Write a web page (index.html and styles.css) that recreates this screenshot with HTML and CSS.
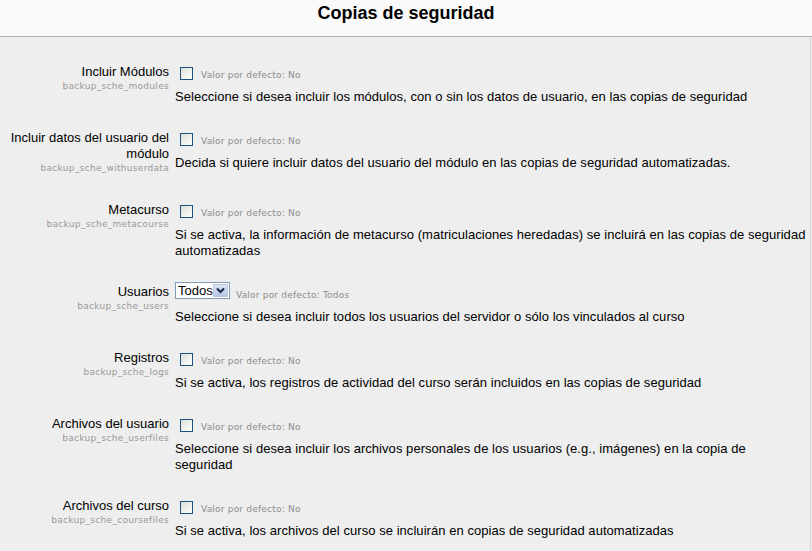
FILE: index.html
```html
<!DOCTYPE html>
<html lang="es">
<head>
    <meta charset="UTF-8">
    <title>Copias de seguridad</title>
    <link rel="stylesheet" href="styles.css">
</head>
<body>

<header class="heading">
    <h2>Copias de seguridad</h2>
</header>

<div class="panel">

    <div class="form-item">
        <div class="form-label">
            <label>Incluir Módulos</label>
            <span class="form-shortname">backup_sche_modules</span>
        </div>
        <div class="form-setting">
            <span class="checkbox"></span>
            <span class="defaultinfo">Valor por defecto: No</span>
        </div>
        <div class="form-description">Seleccione si desea incluir los módulos, con o sin los datos de usuario, en las copias de seguridad</div>
    </div>

    <div class="form-item">
        <div class="form-label">
            <label>Incluir datos del usuario del módulo</label>
            <span class="form-shortname">backup_sche_withuserdata</span>
        </div>
        <div class="form-setting">
            <span class="checkbox"></span>
            <span class="defaultinfo">Valor por defecto: No</span>
        </div>
        <div class="form-description">Decida si quiere incluir datos del usuario del módulo en las copias de seguridad automatizadas.</div>
    </div>

    <div class="form-item">
        <div class="form-label">
            <label>Metacurso</label>
            <span class="form-shortname">backup_sche_metacourse</span>
        </div>
        <div class="form-setting">
            <span class="checkbox"></span>
            <span class="defaultinfo">Valor por defecto: No</span>
        </div>
        <div class="form-description">Si se activa, la información de metacurso (matriculaciones heredadas) se incluirá en las copias de seguridad automatizadas</div>
    </div>

    <div class="form-item">
        <div class="form-label">
            <label>Usuarios</label>
            <span class="form-shortname">backup_sche_users</span>
        </div>
        <div class="form-setting">
            <span class="select">
                <span class="select-value">Todos</span>
                <span class="select-arrow">
                    <svg width="9" height="7" viewBox="0 0 9 7"><path d="M1 1.5 L4.5 5 L8 1.5" fill="none" stroke="#1e2a4a" stroke-width="2.2"/></svg>
                </span>
            </span>
            <span class="defaultinfo after-select">Valor por defecto: Todos</span>
        </div>
        <div class="form-description">Seleccione si desea incluir todos los usuarios del servidor o sólo los vinculados al curso</div>
    </div>

    <div class="form-item">
        <div class="form-label">
            <label>Registros</label>
            <span class="form-shortname">backup_sche_logs</span>
        </div>
        <div class="form-setting">
            <span class="checkbox"></span>
            <span class="defaultinfo">Valor por defecto: No</span>
        </div>
        <div class="form-description">Si se activa, los registros de actividad del curso serán incluidos en las copias de seguridad</div>
    </div>

    <div class="form-item">
        <div class="form-label">
            <label>Archivos del usuario</label>
            <span class="form-shortname">backup_sche_userfiles</span>
        </div>
        <div class="form-setting">
            <span class="checkbox"></span>
            <span class="defaultinfo">Valor por defecto: No</span>
        </div>
        <div class="form-description">Seleccione si desea incluir los archivos personales de los usuarios (e.g., imágenes) en la copia de<br>seguridad</div>
    </div>

    <div class="form-item">
        <div class="form-label">
            <label>Archivos del curso</label>
            <span class="form-shortname">backup_sche_coursefiles</span>
        </div>
        <div class="form-setting">
            <span class="checkbox"></span>
            <span class="defaultinfo">Valor por defecto: No</span>
        </div>
        <div class="form-description">Si se activa, los archivos del curso se incluirán en copias de seguridad automatizadas</div>
    </div>

</div>

</body>
</html>
```

FILE: styles.css
```css
body {
    font-family: "Liberation Sans", Arial, sans-serif;
    font-size: 13px;
    margin: 0;
    padding: 0;
    background-color: #eeeeee;
    color: #000;
}

.heading {
    background-color: #fafafa;
    border-bottom: 1px solid #b4b4b4;
    height: 36px;
    text-align: center;
}

.heading h2 {
    margin: 0;
    padding-top: 3px;
    font-size: 18px;
    line-height: 20px;
    font-weight: bold;
}

.panel {
    margin-right: 1px;
    border-right: 1px solid #d6d6d6;
    padding: 27px 1px 8px 0;
    min-height: calc(100vh - 37px);
    box-sizing: border-box;
}

.form-item {
    display: grid;
    grid-template-columns: 175px 1fr;
    grid-template-rows: 25px auto;
    margin-bottom: 25px;
}

.form-item:last-child {
    margin-bottom: 0;
}

.form-label {
    grid-row: 1 / span 2;
    text-align: right;
    padding-right: 6px;
    padding-bottom: 3px;
    line-height: 16px;
}

.form-label label {
    display: block;
}

.form-shortname {
    display: block;
    font-family: "DejaVu Sans", Verdana, sans-serif;
    font-size: 9px;
    letter-spacing: 0.3px;
    line-height: 12px;
    color: #999;
}

.form-setting {
    display: flex;
    align-items: flex-start;
}

.checkbox {
    width: 11px;
    height: 11px;
    margin: 3px 0 0 5px;
    border: 1px solid #1c5180;
    background: linear-gradient(135deg, #dcdcd6, #ffffff);
}

.defaultinfo {
    font-family: "DejaVu Sans", Verdana, sans-serif;
    font-size: 9px;
    letter-spacing: 0.2px;
    line-height: 12px;
    padding-top: 5px;
    margin-left: 8px;
    color: #8c8c8c;
}

.select {
    display: flex;
    align-items: center;
    width: 53px;
    height: 15px;
    margin-top: -2px;
    border: 1px solid #7f9db9;
    background-color: #fff;
}

.select-value {
    flex: 1;
    padding-left: 2px;
    line-height: 15px;
}

.select-arrow {
    display: flex;
    align-items: center;
    justify-content: center;
    width: 15px;
    height: 13px;
    margin-right: 1px;
    border: 1px solid #b9c6de;
    background: linear-gradient(#dde6f7, #b7c6e3);
    box-sizing: border-box;
}

.defaultinfo.after-select {
    margin-left: 6px;
}

.form-description {
    grid-column: 2;
    line-height: 16px;
    letter-spacing: 0.05px;
}
```
